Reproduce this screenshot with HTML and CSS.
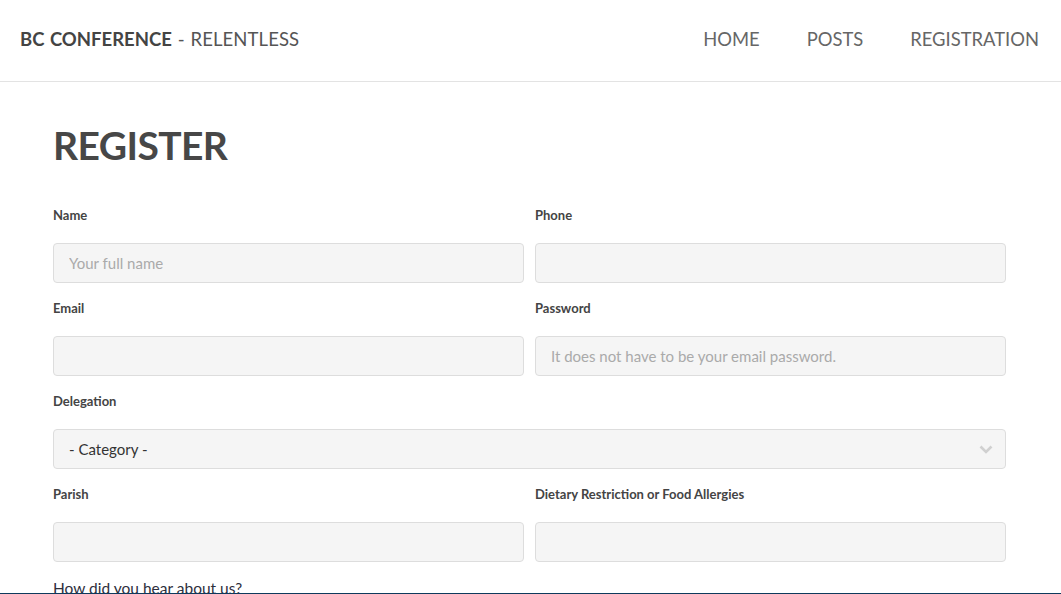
FILE: index.html
```html
<!DOCTYPE html>
<html lang="en">
<head>
<meta charset="utf-8">
<title>Register - BC Conference</title>
<link rel="stylesheet" href="styles.css">
</head>
<body>
<header class="topbar">
  <a class="brand" href="#"><strong>BC CONFERENCE</strong> - RELENTLESS</a>
  <nav class="menu">
    <a href="#">HOME</a>
    <a href="#">POSTS</a>
    <a href="#">REGISTRATION</a>
  </nav>
</header>
<main class="content">
  <h1 class="title">REGISTER</h1>
  <form class="form">
    <div class="field">
      <label class="label">Name</label>
      <input class="input" type="text" placeholder="Your full name">
    </div>
    <div class="field">
      <label class="label">Phone</label>
      <input class="input" type="text">
    </div>
    <div class="field">
      <label class="label">Email</label>
      <input class="input" type="text">
    </div>
    <div class="field">
      <label class="label">Password</label>
      <input class="input" type="text" placeholder="It does not have to be your email password.">
    </div>
    <div class="field wide">
      <label class="label">Delegation</label>
      <div class="select">
        <span>- Category -</span>
        <svg class="chev" width="14" height="9" viewBox="0 0 14 9"><path d="M1.5 1.5 L7 7 L12.5 1.5" fill="none" stroke="#d0d0d0" stroke-width="2.6"/></svg>
      </div>
    </div>
    <div class="field">
      <label class="label">Parish</label>
      <input class="input" type="text">
    </div>
    <div class="field">
      <label class="label">Dietary Restriction or Food Allergies</label>
      <input class="input" type="text">
    </div>
    <div class="field wide">
      <p class="question">How did you hear about us?</p>
    </div>
  </form>
</main>
<div class="bottomline"></div>
</body>
</html>
```

FILE: styles.css
```css
* { box-sizing: border-box; }
html, body { margin: 0; padding: 0; }
body {
  font-family: Lato, "Open Sans", sans-serif;
  color: #444;
  background: #fff;
  overflow: hidden;
}
.topbar {
  height: 82px;
  border-bottom: 1px solid #e3e3e3;
  display: flex;
  align-items: center;
  justify-content: space-between;
  padding: 0 22px 0 20px;
}
.brand {
  font-size: 18.5px;
  color: #555;
  text-decoration: none;
  letter-spacing: 0.1px;
  word-spacing: 1px;
  margin-top: -4px;
}
.brand strong { color: #444; font-weight: 700; letter-spacing: 0; }
.menu { display: flex; gap: 47px; margin-top: -4px; }
.menu a {
  font-size: 18.4px;
  color: #666;
  text-decoration: none;
  letter-spacing: 0;
}
.content { padding: 0 55px 0 53px; }
.title {
  margin: 38px 0 0;
  font-size: 39px;
  line-height: 50px;
  font-weight: 700;
  color: #474747;
  letter-spacing: -0.6px;
}
.form {
  margin-top: 35px;
  display: grid;
  grid-template-columns: 1fr 1fr;
  column-gap: 11px;
}
.field { display: flex; flex-direction: column; }
.field.wide { grid-column: 1 / -1; }
.label {
  font-size: 13px;
  font-weight: 700;
  line-height: 20px;
  color: #444;
  margin-bottom: 18px;
}
.input, .select {
  height: 40px;
  border: 1px solid #ddd;
  border-radius: 4px;
  background: #f5f5f5;
  font-family: inherit;
  font-size: 15px;
  color: #333;
  padding: 0 15px;
  margin-bottom: 15px;
  width: 100%;
}
.input::placeholder { color: #aaa; }
.select {
  display: flex;
  align-items: center;
  justify-content: space-between;
  padding-right: 12px;
}
.chev { display: block; }
.question {
  margin: 1px 0 0;
  font-size: 15.5px;
  line-height: 20px;
  color: #2e2e3c;
}
.bottomline {
  position: fixed;
  left: 0;
  right: 0;
  bottom: 0;
  height: 1px;
  background: #0e3a5c;
}
```
